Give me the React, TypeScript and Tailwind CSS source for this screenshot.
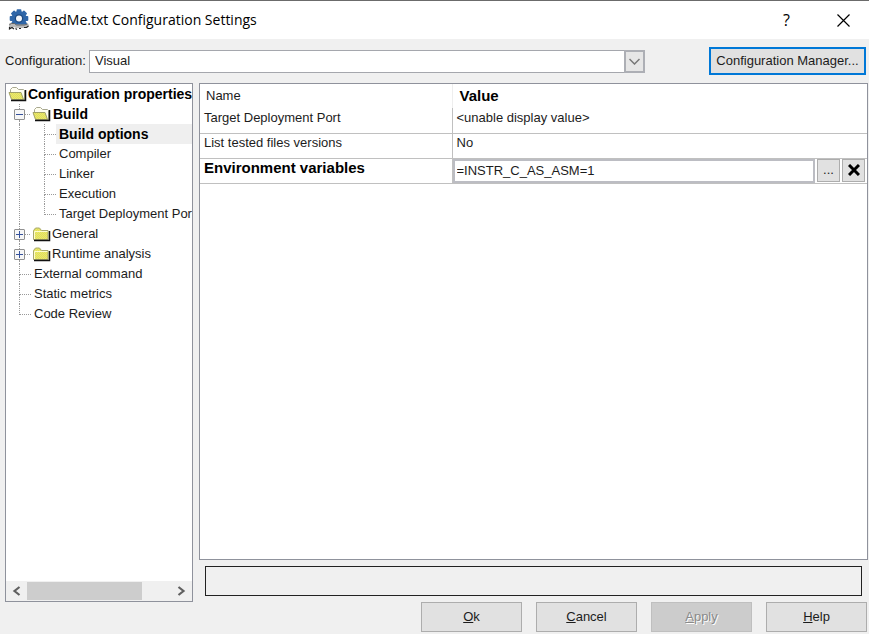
import React, { useState } from "react";

const GearIcon: React.FC = () => (
  <svg width="22" height="22" viewBox="0 0 22 22" aria-hidden="true">
    <g fill="#2f66a8">
      <circle cx="11" cy="9.500" r="7.600" />
      {[0, 45, 90, 135, 180, 225, 270, 315].map((angle) => (
        <rect key={angle} x="8.600" y="0.200" width="4.800" height="5" rx="0.8" transform={`rotate(${angle} 11 9.5)`} />
      ))}
    </g>
    <circle cx="11" cy="9.500" r="4.200" fill="#1f4a80" />
    <circle cx="11" cy="9.500" r="3" fill="#f4f6fa" />
    <path d="M1 14.500l4-.5 3 1.500h9l3-1 1 2-2 2-3 .5H8l-2-1-4 1.500-1-1z" fill="#b9b9b9" />
    <path d="M1.500 15.500l2-1h3l2 1.500h8l3-1" fill="none" stroke="#666" />
    <path d="M1.500 18v2l2.500-1.500 2 1.500M7.500 19.500l1.500 1M11 19.500h2M16 18.500h2.500l2-1.500" fill="none" stroke="#222" strokeWidth="1.200" />
  </svg>
);

const FolderIcon: React.FC<{ open?: boolean }> = ({ open }) => (
  <svg width="19" height="16" viewBox="0 0 19 16" className="shrink-0" aria-hidden="true">
    <defs>
      <pattern id="dither" width="2" height="2" patternUnits="userSpaceOnUse">
        <rect width="2" height="2" fill="#f0ee60" />
        <rect width="1" height="1" fill="#dad868" />
        <rect x="1" y="1" width="1" height="1" fill="#dad868" />
      </pattern>
    </defs>
    {open ? (
      <>
        <path d="M2.500 7V3.500l2-2h4l2 2h5l1 1V14H4.500z" fill="#fffef0" stroke="#a8a890" />
        <path d="M1 6.500h12l2.500 7h-12z" fill="url(#dither)" stroke="#a0a068" />
        <path d="M3 14.500h14.500V4" fill="none" stroke="#111" strokeWidth="1.500" />
      </>
    ) : (
      <>
        <path d="M1.500 13.500V4.500l2-2.500h4l2 2.500h6.500v9z" fill="url(#dither)" stroke="#a8a86c" />
        <path d="M2.500 13V5.500h13" fill="none" stroke="#fdfdd0" />
        <path d="M2 14.500h15.500V5" fill="none" stroke="#111" strokeWidth="1.500" />
      </>
    )}
  </svg>
);

const Branch: React.FC<{ last?: boolean }> = ({ last }) => (
  <span className="flex h-5 w-3 shrink-0 flex-col">
    <span className="h-[11px] border-b border-l border-dotted border-[#999]" />
    <span className={last ? "h-[9px]" : "h-[9px] border-l border-dotted border-[#999]"} />
  </span>
);

const Expander: React.FC<{ expanded: boolean; label: string; onClick: () => void }> = ({ expanded, label, onClick }) => (
  <span className="flex h-5 w-[18px] shrink-0 items-center">
    <span className="flex h-5 w-[11px] flex-col items-center">
      <span className="h-[5px] border-l border-dotted border-[#999]" />
      <button
        type="button"
        onClick={onClick}
        aria-expanded={expanded}
        aria-label={label}
        className="flex h-[11px] w-[11px] items-center justify-center rounded-[1px] border border-[#919191] bg-[#f6f6f6]"
      >
        <svg width="7" height="7" viewBox="0 0 7 7" stroke="#34519c">
          <path d={expanded ? "M0 3.500h7" : "M0 3.500h7M3.500 0v7"} />
        </svg>
      </button>
      <span className="h-1 border-l border-dotted border-[#999]" />
    </span>
    <span className="w-[5px] border-b border-dotted border-[#999]" />
  </span>
);

const buildItems = ["Build options", "Compiler", "Linker", "Execution", "Target Deployment Port"];
const otherItems = ["External command", "Static metrics", "Code Review"];

const Tree: React.FC = () => {
  const [selected, setSelected] = useState("Build options");
  const [open, setOpen] = useState<Record<string, boolean>>({ Build: true });
  const toggle = (name: string) => setOpen({ ...open, [name]: !open[name] });

  return (
    <ul className="min-h-0 flex-1 overflow-hidden whitespace-nowrap leading-5">
      <li className="flex h-5 items-center pl-[2px] text-sm font-bold text-black">
        <FolderIcon open />
        <span className="pl-px">Configuration properties</span>
      </li>
      <li>
        <div className="flex h-5 items-center pl-2">
          <Expander expanded={!!open.Build} label="Build" onClick={() => toggle("Build")} />
          <FolderIcon open />
          <span className="pl-[2px] text-sm font-bold text-black">Build</span>
        </div>
        {open.Build && (
          <ul className="ml-[13px] border-l border-dotted border-[#999] pl-6">
            {buildItems.map((item, i) => (
              <li key={item} className="flex h-5">
                <Branch last={i === buildItems.length - 1} />
                <button
                  type="button"
                  onClick={() => setSelected(item)}
                  className={
                    selected === item
                      ? "flex-1 bg-[#efefef] pl-[3px] text-left text-sm font-bold text-black"
                      : "flex-1 pl-[3px] text-left"
                  }
                >
                  {item}
                </button>
              </li>
            ))}
          </ul>
        )}
      </li>
      {["General", "Runtime analysis"].map((item) => (
        <li key={item} className="flex h-5 items-center pl-2">
          <Expander expanded={!!open[item]} label={item} onClick={() => toggle(item)} />
          <FolderIcon open={open[item]} />
          <span className="pl-px">{item}</span>
        </li>
      ))}
      {otherItems.map((item, i) => (
        <li key={item} className="flex h-5 pl-[13px]">
          <Branch last={i === otherItems.length - 1} />
          <button
            type="button"
            onClick={() => setSelected(item)}
            className={selected === item ? "bg-[#efefef] px-[3px] font-bold" : "px-[3px]"}
          >
            {item}
          </button>
        </li>
      ))}
    </ul>
  );
};

const ScrollBar: React.FC = () => (
  <div className="flex h-5 items-center bg-[#f0f0f0]">
    <button type="button" aria-label="Scroll left" className="flex w-[21px] justify-center">
      <svg width="9" height="10" viewBox="0 0 9 10" fill="none" stroke="#606060" strokeWidth="2.200">
        <path d="M7.500 1L2.500 5l5 4" />
      </svg>
    </button>
    <div className="flex-1">
      <div className="h-[18px] w-4/5 bg-[#cdcdcd]" />
    </div>
    <button type="button" aria-label="Scroll right" className="flex w-[21px] justify-center">
      <svg width="9" height="10" viewBox="0 0 9 10" fill="none" stroke="#606060" strokeWidth="2.200">
        <path d="M1.500 1l5 4-5 4" />
      </svg>
    </button>
  </div>
);

const App: React.FC = () => {
  const [config, setConfig] = useState("Visual");
  const [variables, setVariables] = useState("=INSTR_C_AS_ASM=1");

  return (
    <div className="flex min-h-screen flex-col border-t border-[#6b6b6b] bg-[#f0f0f0] font-['Liberation_Sans',Arial,sans-serif] text-[13px] text-[#1c1c1c]">
      <header className="flex h-[38px] items-center bg-white pl-2">
        <GearIcon />
        <h1 className="flex-1 pl-1 font-['Open_Sans',sans-serif] text-sm text-black">
          ReadMe.txt Configuration Settings
        </h1>
        <button type="button" aria-label="Help" className="w-[63px] font-['Open_Sans',sans-serif] text-base text-black">
          ?
        </button>
        <button type="button" aria-label="Close" className="flex w-[51px] justify-center">
          <svg width="13" height="13" viewBox="0 0 13 13" stroke="#000" strokeWidth="1.200">
            <path d="M.5.5l12 12M12.500.5l-12 12" />
          </svg>
        </button>
      </header>

      <div className="flex h-11 items-center pr-[3px] pl-[5px]">
        <label htmlFor="configuration" className="w-[84px] whitespace-nowrap">
          Configuration:
        </label>
        <div className="relative mr-16 flex-1">
          <select
            id="configuration"
            value={config}
            onChange={(e) => setConfig(e.target.value)}
            className="block h-[23px] w-full appearance-none border border-[#a5a7ad] bg-white pl-[5px]"
          >
            <option>Visual</option>
          </select>
          <span className="pointer-events-none absolute top-0 right-0 flex h-[23px] w-[21px] items-center justify-center border-2 border-[#adafb5] bg-[#e6e6e6]">
            <svg width="11" height="7" viewBox="0 0 11 7" fill="none" stroke="#777" strokeWidth="1.500">
              <path d="M.5 1l5 5 5-5" />
            </svg>
          </span>
        </div>
        <button type="button" className="h-7 w-[157px] border-2 border-[#0078d7] bg-[#e1e1e1] whitespace-nowrap">
          Configuration Manager...
        </button>
      </div>

      <main className="flex flex-1 gap-[6px] pr-px pl-[5px]">
        <nav className="mb-8 flex w-[188px] flex-col border border-[#8f929c]">
          <div className="flex flex-1 flex-col bg-white">
            <Tree />
          </div>
          <ScrollBar />
        </nav>

        <div className="flex flex-1 flex-col">
          <div className="flex-1 border border-[#8f929c] bg-white">
            <table className="w-full table-fixed border-collapse">
              <thead>
                <tr className="h-6 text-left">
                  <th className="w-[252px] border-r border-[#eee] pl-[6px] font-normal">Name</th>
                  <th className="pl-[7px] text-[15px] text-black">Value</th>
                </tr>
              </thead>
              <tbody>
                <tr className="h-[25px] border-b border-[#c0c0c0] align-top leading-5">
                  <td className="border-r border-[#c0c0c0] pl-1">Target Deployment Port</td>
                  <td className="pl-1">&lt;unable display value&gt;</td>
                </tr>
                <tr className="h-[25px] border-b border-[#c0c0c0] align-top leading-[18px]">
                  <td className="border-r border-[#c0c0c0] pl-1">List tested files versions</td>
                  <td className="pl-1">No</td>
                </tr>
                <tr className="h-[25px] border-b border-[#c0c0c0] align-top leading-[18px]">
                  <td className="border-r border-[#c0c0c0] pl-1 text-[15px] font-bold text-black">
                    <label htmlFor="variables">Environment variables</label>
                  </td>
                  <td className="p-0">
                    <div className="flex gap-[2px] pr-[2px]">
                      <input
                        id="variables"
                        value={variables}
                        onChange={(e) => setVariables(e.target.value)}
                        className="h-6 min-w-0 flex-1 border-2 border-[#bcbdc3] bg-white pl-[2px]"
                      />
                      <button type="button" aria-label="Edit" className="h-[23px] w-[23px] border border-[#adadad] bg-[#e1e1e1]">
                        ...
                      </button>
                      <button
                        type="button"
                        aria-label="Delete"
                        className="flex h-[23px] w-[23px] items-center justify-center border border-[#adadad] bg-[#e1e1e1]"
                      >
                        <svg width="12" height="12" viewBox="0 0 12 12" stroke="#000" strokeWidth="3">
                          <path d="M1 1l10 10M11 1L1 11" />
                        </svg>
                      </button>
                    </div>
                  </td>
                </tr>
              </tbody>
            </table>
          </div>
          <div className="m-[6px] h-[30px] border border-[#222]" />
          <footer className="mr-px mb-[2px] flex h-[30px] justify-end gap-[14px]">
            <button type="button" className="w-[101px] border border-[#adadad] bg-[#e1e1e1]">
              <u>O</u>k
            </button>
            <button type="button" className="w-[101px] border border-[#adadad] bg-[#e1e1e1]">
              <u>C</u>ancel
            </button>
            <button
              type="button"
              disabled
              className="w-[101px] border border-[#bfbfbf] bg-[#cccccc] text-[#8a8a8a] [text-shadow:1px_1px_0_white]"
            >
              <u>A</u>pply
            </button>
            <button type="button" className="w-[101px] border border-[#adadad] bg-[#e1e1e1]">
              <u>H</u>elp
            </button>
          </footer>
        </div>
      </main>
    </div>
  );
};

export default App;
